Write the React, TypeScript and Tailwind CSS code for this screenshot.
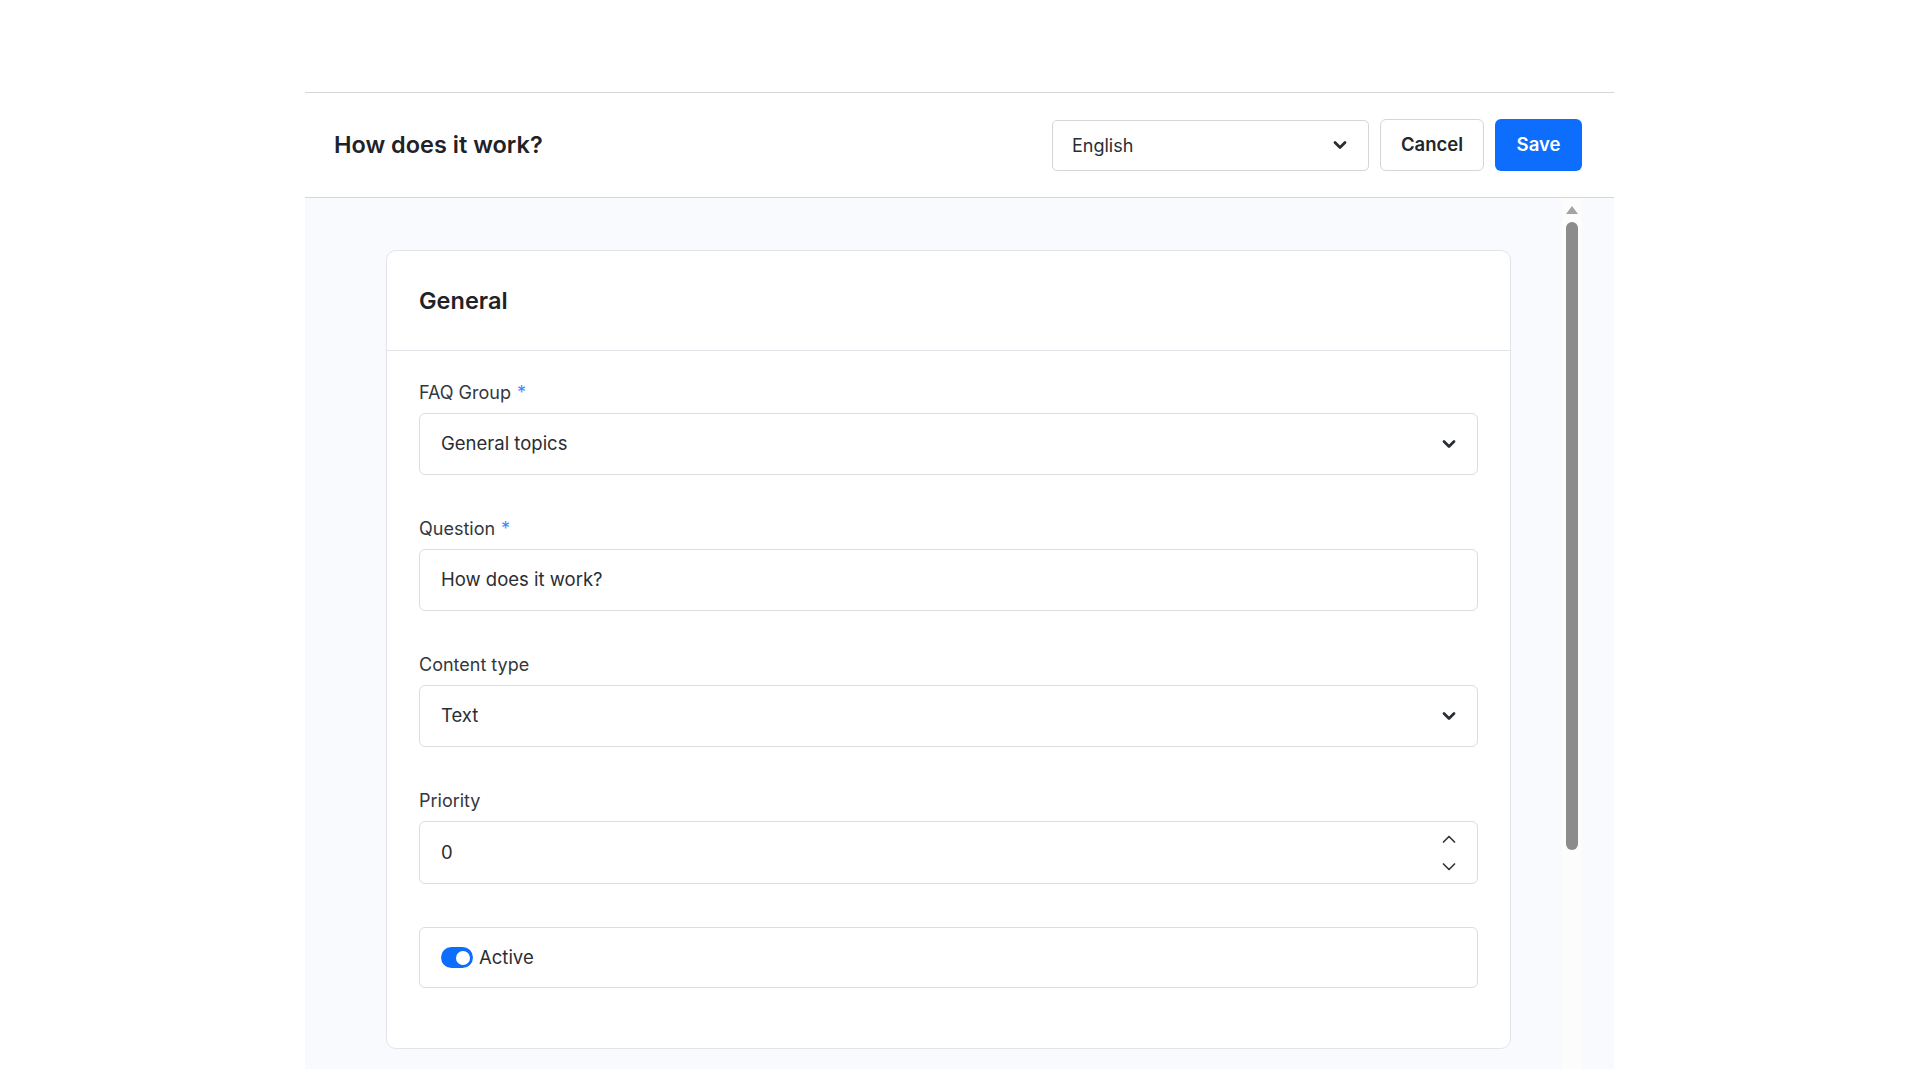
import React from "react";

function Chevron({ className = "" }: { className?: string }) {
  return (
    <svg viewBox="0 0 16 16" className={className} fill="none" stroke="currentColor" strokeWidth={2.8} strokeLinecap="round" strokeLinejoin="round">
      <path d="M3 5.5 8 10.5l5-5" />
    </svg>
  );
}

function Label({ text, required }: { text: string; required?: boolean }) {
  return (
    <div className="mb-[7px] text-[18px] leading-[27px] text-[#33383d]">
      {text}
      {required && <span className="ml-[6px] text-[#3d8bfd]">*</span>}
    </div>
  );
}

function SelectBox({ value }: { value: string }) {
  return (
    <div className="flex h-[62px] items-center justify-between rounded-[6px] border border-[#dcdce1] bg-white pl-[21px] pr-[20px] text-[18.5px] text-[#2a2e33]">
      <span>{value}</span>
      <Chevron className="h-[16px] w-[16px] text-[#2a2e33]" />
    </div>
  );
}

function TextBox({ value }: { value: string }) {
  return (
    <div className="flex h-[62px] items-center rounded-[6px] border border-[#dcdce1] bg-white px-[21px] text-[18.5px] text-[#2a2e33]">
      {value}
    </div>
  );
}

function NumberBox({ value }: { value: string }) {
  return (
    <div className="flex h-[63px] items-center justify-between rounded-[6px] border border-[#dcdce1] bg-white pl-[21px] pr-[20px] text-[18.5px] text-[#2a2e33]">
      <span>{value}</span>
      <div className="flex flex-col items-center gap-[20px]">
        <svg viewBox="0 0 16 8" className="h-[8px] w-[16px]" fill="none" stroke="#33383d" strokeWidth={1.7} strokeLinecap="round" strokeLinejoin="round">
          <path d="M2.5 7 8 1.5 13.5 7" />
        </svg>
        <svg viewBox="0 0 16 8" className="h-[8px] w-[16px]" fill="none" stroke="#33383d" strokeWidth={1.7} strokeLinecap="round" strokeLinejoin="round">
          <path d="M2.5 1 8 6.5 13.5 1" />
        </svg>
      </div>
    </div>
  );
}

export default function App() {
  return (
    <div className="min-h-screen bg-white pt-[92px]" style={{ fontFamily: "Inter, 'Noto Sans', sans-serif" }}>
      <div className="ml-[305px] w-[1309px]">
        {/* top bar */}
        <header className="flex h-[106px] items-center justify-between border-y border-[#d5d5db] pl-[29px] pr-[32px]">
          <h1 className="text-[23.5px] font-semibold text-[#1f2328]">How does it work?</h1>
          <div className="flex items-center">
            <div className="flex h-[51px] w-[317px] items-center justify-between rounded-[5px] border border-[#d5d5db] pl-[19px] pr-[20px] text-[18px] text-[#2a2e33]">
              <span>English</span>
              <Chevron className="h-[16px] w-[16px] text-[#2a2e33]" />
            </div>
            <button className="ml-[11px] h-[52px] w-[104px] rounded-[6px] border border-[#d5d5db] bg-white text-[18.5px] font-semibold text-[#23272b]">
              Cancel
            </button>
            <button className="ml-[11px] h-[52px] w-[87px] rounded-[6px] bg-[#0d6efd] text-[18.5px] font-semibold text-white">
              Save
            </button>
          </div>
        </header>

        {/* scrolling body */}
        <div className="flex h-[871px] bg-[#f9fafd]">
          <div className="pl-[81px] pt-[52px]">
            <div className="w-[1125px] rounded-[10px] border border-[#e3e4e9] bg-white">
              <div className="flex h-[100px] items-center border-b border-[#e3e4e9] px-[32px]">
                <h2 className="text-[23.5px] font-semibold text-[#1f2328]">General</h2>
              </div>
              <div className="px-[32px] pb-[60px] pt-[28px]">
                <div className="mb-[40px]">
                  <Label text="FAQ Group" required />
                  <SelectBox value="General topics" />
                </div>
                <div className="mb-[40px]">
                  <Label text="Question" required />
                  <TextBox value="How does it work?" />
                </div>
                <div className="mb-[40px]">
                  <Label text="Content type" />
                  <SelectBox value="Text" />
                </div>
                <div className="mb-[43px]">
                  <Label text="Priority" />
                  <NumberBox value="0" />
                </div>
                <div className="flex h-[61px] items-center gap-[6px] rounded-[6px] border border-[#dcdce1] px-[21px] text-[18.5px] text-[#2a2e33]">
                  <div className="flex h-[21px] w-[32px] items-center justify-end rounded-full bg-[#0d6efd] pr-[3px]">
                    <div className="h-[14px] w-[14px] rounded-full bg-white" />
                  </div>
                  <span>Active</span>
                </div>
              </div>
            </div>
          </div>

          {/* scrollbar */}
          <div className="ml-[51px] flex w-[20px] flex-col items-center bg-[#fcfcfd] pt-[8px]">
            <svg viewBox="0 0 12 8" className="h-[8px] w-[12px]">
              <path d="M6 0 12 8H0z" fill="#a3a3a3" />
            </svg>
            <div className="mt-[8px] h-[628px] w-[12px] rounded-full bg-[#8c8c8c]" />
          </div>
        </div>
      </div>
    </div>
  );
}
